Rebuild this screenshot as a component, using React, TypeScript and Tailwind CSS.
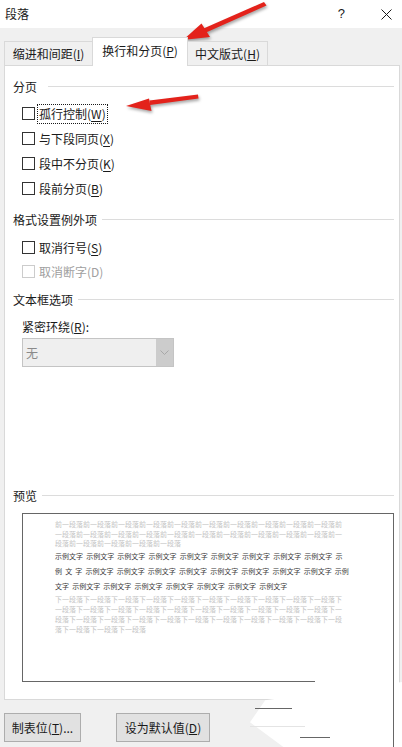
import type { JSX } from "react";

const FONT = "font-['Microsoft_YaHei_UI','Noto_Sans_CJK_SC','Noto_Sans',sans-serif]";

function Heading({ text, gap = "ml-[5px]" }: { text: string; gap?: string }): JSX.Element {
    return (
        <div className="flex items-center h-[17px] pr-[5px]">
            <span className="text-[12px] leading-[17px] text-[#1a1a1a] whitespace-nowrap">{text}</span>
            <div className={`flex-1 h-px bg-[#dcdcdc] ${gap}`} />
        </div>
    );
}

function CheckRow({
    label,
    hotkey,
    focused = false,
    disabled = false,
    height = "h-[25px]",
}: {
    label: string;
    hotkey: string;
    focused?: boolean;
    disabled?: boolean;
    height?: string;
}): JSX.Element {
    return (
        <div className={`flex items-center ${height} pl-[9px]`}>
            <div
                className={`w-[13px] h-[13px] border bg-white ${disabled ? "border-[#cccccc]" : "border-[#333333]"}`}
            />
            <span
                className={`ml-[2px] px-[1px] h-[20px] flex items-center border border-dotted text-[12px] leading-[17px] ${
                    focused ? "border-[#1a1a1a]" : "border-transparent"
                } ${disabled ? "text-[#a0a0a0]" : "text-[#1a1a1a]"}`}
            >
                {label}(
                {disabled ? hotkey : <u className="underline-offset-2">{hotkey}</u>})
            </span>
        </div>
    );
}

// preview lines are written out so that wrapping matches the dialog
const BEFORE = [
    "前一段落前一段落前一段落前一段落前一段落前一段落前一段落前一段落前一段落前一段落前",
    "一段落前一段落前一段落前一段落前一段落前一段落前一段落前一段落前一段落前一段落前一",
    "段落前一段落前一段落前一段落前一段落",
];
const SAMPLE = [
    "示例文字 示例文字 示例文字 示例文字 示例文字 示例文字 示例文字 示例文字 示例文字 示",
    "例 文 字 示例文字 示例文字 示例文字 示例文字 示例文字 示例文字 示例文字 示例文字 示例",
    "文字 示例文字 示例文字 示例文字 示例文字 示例文字 示例文字 示例文字",
];
const AFTER = [
    "下一段落下一段落下一段落下一段落下一段落下一段落下一段落下一段落下一段落下一段落下",
    "一段落下一段落下一段落下一段落下一段落下一段落下一段落下一段落下一段落下一段落下一",
    "段落下一段落下一段落下一段落下一段落下一段落下一段落下一段落下一段落下一段落下一段",
    "落下一段落下一段落下一段落",
];

function Arrows(): JSX.Element {
    return (
        <svg
            className="absolute left-0 top-0 pointer-events-none"
            width="402"
            height="747"
            viewBox="0 0 402 747"
            style={{ filter: "drop-shadow(1px 2px 1.5px rgba(0,0,0,0.35))" }}
        >
            {/* arrow to the tab */}
            <polygon points="264,2 266.5,5.5 206,32.5 203.5,28.5" fill="#e3221b" />
            <polygon points="183,40 201.5,23.5 210,37" fill="#e3221b" />
            {/* arrow to the checkbox */}
            <polygon points="198,94.5 198.5,98.5 150,105 149.5,100.5" fill="#e3221b" />
            <polygon points="126,106 149,98.5 151.5,111" fill="#e3221b" />
        </svg>
    );
}

export default function App(): JSX.Element {
    return (
        <div className={`relative w-[402px] h-[747px] overflow-hidden bg-[#f0f0f0] ${FONT}`}>
            {/* title bar */}
            <div className="h-[28px] bg-white flex items-center pl-[5px] pr-[10px]">
                <span className="text-[12px] text-[#1a1a1a]">段落</span>
                <span className="ml-auto mr-[36px] text-[13px] text-[#1a1a1a] font-['Liberation_Sans',sans-serif]">?</span>
                <svg width="11" height="11" viewBox="0 0 11 11" className="mr-[0px]">
                    <path d="M0.5 0.5 L10.5 10.5 M10.5 0.5 L0.5 10.5" stroke="#1a1a1a" strokeWidth="1" />
                </svg>
            </div>

            {/* tabs */}
            <div className="flex items-end pl-[4px] pt-[9px] relative z-10">
                <div className="w-[88px] h-[24px] border border-r-0 border-b-0 border-[#d9d9d9] bg-[#f0f0f0] flex items-center justify-center text-[12px] text-[#1a1a1a] mb-px">
                    缩进和间距(<u>I</u>)
                </div>
                <div className="w-[96px] h-[29px] border border-b-0 border-[#d9d9d9] bg-white flex items-center justify-center pb-[2px] text-[12px] text-[#1a1a1a]">
                    换行和分页(<u>P</u>)
                </div>
                <div className="w-[80px] h-[24px] border border-l-0 border-b-0 border-[#d9d9d9] bg-[#f0f0f0] flex items-center justify-center text-[12px] text-[#1a1a1a] mb-px">
                    中文版式(<u>H</u>)
                </div>
            </div>

            {/* panel */}
            <div className="ml-[4px] w-[396px] h-[635px] -mt-px border border-[#d9d9d9] bg-white pl-[8px] pt-[12px]">
                <Heading text="分页" gap="ml-[11px]" />
                <div className="mt-[6px]">
                    <CheckRow label="孤行控制" hotkey="W" focused />
                    <CheckRow label="与下段同页" hotkey="X" />
                    <CheckRow label="段中不分页" hotkey="K" />
                    <CheckRow label="段前分页" hotkey="B" />
                </div>

                <div className="mt-[10px]">
                    <Heading text="格式设置例外项" />
                </div>
                <div className="mt-[7px]">
                    <CheckRow label="取消行号" hotkey="S" height="h-[24px]" />
                    <CheckRow label="取消断字" hotkey="D" height="h-[24px]" disabled />
                </div>

                <div className="mt-[8px]">
                    <Heading text="文本框选项" />
                </div>
                <div className="mt-[10px] pl-[9px] h-[17px] text-[12px] leading-[17px] text-[#1a1a1a]">
                    紧密环绕(<u>R</u>):
                </div>
                <div className="mt-[3px] ml-[9px] w-[152px] h-[29px] border border-[#c4c4c4] bg-[#efefef] flex">
                    <span className="flex-1 pl-[3px] text-[12px] leading-[27px] text-[#8a8a8a]">无</span>
                    <div className="w-[17px] h-full bg-[#cccccc] flex items-center justify-center">
                        <svg width="9" height="5" viewBox="0 0 9 5">
                            <path d="M0.5 0.5 L4.5 4.5 L8.5 0.5" fill="none" stroke="#a8a8a8" strokeWidth="1" />
                        </svg>
                    </div>
                </div>

                <div className="mt-[120px]">
                    <Heading text="预览" />
                </div>
                <div className="mt-[9px] ml-[9px] w-[372px] h-[169px] border border-[#666666] bg-white pl-[32px] pt-[6px] text-[7px] whitespace-pre">
                    <div className="text-[#c4c4c4] leading-[9.5px]">
                        {BEFORE.map((l) => (
                            <div key={l}>{l}</div>
                        ))}
                    </div>
                    <div className="text-[#3a3a3a] leading-[15px] [word-spacing:1.6px]">
                        {SAMPLE.map((l) => (
                            <div key={l}>{l}</div>
                        ))}
                    </div>
                    <div className="text-[#c4c4c4] leading-[10px]">
                        {AFTER.map((l) => (
                            <div key={l}>{l}</div>
                        ))}
                    </div>
                </div>
            </div>

            {/* buttons */}
            <div className="flex mt-[13px] pl-[4px] gap-[35px]">
                <button className="w-[77px] h-[29px] border border-[#adadad] bg-[#e1e1e1] text-[12px] text-[#1a1a1a]">
                    制表位(<u>T</u>)...
                </button>
                <button className="w-[94px] h-[29px] border border-[#adadad] bg-[#e1e1e1] text-[12px] text-[#1a1a1a]">
                    设为默认值(<u>D</u>)
                </button>
            </div>

            {/* leftover cut-out at bottom right of the screenshot */}
            <div className="absolute left-[250px] top-[682px] w-[152px] h-[65px] bg-white [clip-path:polygon(10%_28%,100%_0,100%_100%,22%_100%,0_62%)]" />
            <div className="absolute left-[315px] top-[681px] w-[78px] h-px bg-white" />
            <div className="absolute left-[393px] top-[681px] w-px h-[66px] bg-[#666666]" />
            <div className="absolute left-[255px] top-[708px] w-[37px] h-px bg-[#666666]" />
            <div className="absolute left-[250px] top-[726px] w-[55px] h-px bg-[#e4e4e4]" />
            <div className="absolute left-[300px] top-[737px] w-[30px] h-px bg-[#666666]" />

            <Arrows />
        </div>
    );
}
